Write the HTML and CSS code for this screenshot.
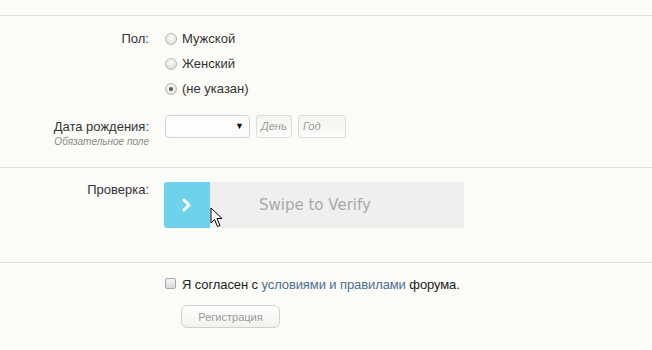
FILE: index.html
```html
<!DOCTYPE html>
<html lang="ru">
<head>
<meta charset="utf-8">
<link rel="stylesheet" href="styles.css">
</head>
<body>
<div class="page">
  <div class="top"></div>

  <section class="block block-1">
    <div class="row">
      <div class="label">Пол:</div>
      <div class="radios">
        <label class="opt"><span class="radio"></span>Мужской</label>
        <label class="opt"><span class="radio"></span>Женский</label>
        <label class="opt"><span class="radio checked"></span>(не указан)</label>
      </div>
    </div>
    <div class="row row-date">
      <div class="label">Дата рождения:<div class="hint">Обязательное поле</div></div>
      <div class="date">
        <div class="select"><span class="arrow">▼</span></div>
        <div class="input day">День</div>
        <div class="input year">Год</div>
      </div>
    </div>
  </section>

  <section class="block block-2">
    <div class="row">
      <div class="label label-top">Проверка:</div>
      <div class="slider">
        <div class="handle">
          <svg width="12" height="14" viewBox="0 0 12 14"><path d="M3 2 L8 7 L3 12" fill="none" stroke="#fff" stroke-width="3" stroke-linecap="round" stroke-linejoin="round"/></svg>
        </div>
        <div class="track">Swipe to Verify</div>
        <svg class="cursor" width="14" height="21" viewBox="0 0 14 21"><path d="M1 1 L1 16 L4.5 12.5 L7.5 19.5 L10 18.5 L7 11.5 L12 11.5 Z" fill="#fff" stroke="#000" stroke-width="1" stroke-linejoin="round"/></svg>
      </div>
    </div>
  </section>

  <section class="block block-3">
    <div class="row">
      <div class="label"></div>
      <div class="agree">
        <div class="check-line"><span class="checkbox"></span>Я согласен с <a class="link">условиями и правилами</a> форума.</div>
        <div class="button">Регистрация</div>
      </div>
    </div>
  </section>
</div>
</body>
</html>
```

FILE: styles.css
```css
html, body {
  margin: 0;
  padding: 0;
  background: #fbfbf7;
}
body {
  font-family: "Liberation Sans", Arial, sans-serif;
  font-size: 13px;
  color: #333;
  width: 652px;
  height: 350px;
  overflow: hidden;
}
.top {
  height: 15px;
}
.block {
  border-top: 1px solid #e1e1dc;
}
.block-1 {
  padding-top: 10px;
  height: 141px;
}
.block-2 {
  padding-top: 14px;
  height: 80px;
}
.block-3 {
  padding-top: 12px;
}
.row {
  display: grid;
  grid-template-columns: 149px 1fr;
  column-gap: 15px;
}
.label {
  text-align: right;
  line-height: 25px;
  color: #333;
}
.label-top {
  line-height: 16px;
}
.radios {
  display: flex;
  flex-direction: column;
}
.opt {
  display: flex;
  align-items: center;
  height: 25px;
  color: #333;
}
.radio {
  width: 12px;
  height: 12px;
  box-sizing: border-box;
  border-radius: 50%;
  border: 1px solid #b9b9b9;
  background: radial-gradient(circle at 50% 35%, #fafafa 0%, #e6e6e6 60%, #d4d4d4 100%);
  margin: 0 5px 0 1px;
  position: relative;
}
.radio.checked::after {
  content: "";
  position: absolute;
  left: 3px;
  top: 3px;
  width: 4px;
  height: 4px;
  border-radius: 50%;
  background: #555;
}
.row-date {
  margin-top: 14px;
}
.row-date .label {
  line-height: 23px;
}
.hint {
  font-size: 10px;
  font-style: italic;
  color: #8a8a8a;
  line-height: 11px;
  margin-top: -2px;
}
.date {
  display: flex;
  gap: 6px;
  align-items: flex-start;
  padding-left: 1px;
}
.select {
  width: 85px;
  height: 23px;
  box-sizing: border-box;
  border: 1px solid #d3d3d3;
  border-radius: 4px;
  background: #fdfdfd;
  position: relative;
}
.arrow {
  position: absolute;
  right: 5px;
  top: 5px;
  font-size: 9px;
  color: #111;
}
.input {
  height: 23px;
  box-sizing: border-box;
  border: 1px solid #dcdcdc;
  border-radius: 3px;
  background: linear-gradient(#f4f4f1, #fbfbf9);
  font-size: 11px;
  font-style: italic;
  color: #9a9a9a;
  padding: 4px 0 0 4px;
}
.day {
  width: 36px;
}
.year {
  width: 48px;
}
.slider {
  display: flex;
  width: 300px;
  height: 46px;
  position: relative;
}
.handle {
  width: 46px;
  height: 46px;
  background: #6dd2ea;
  border-radius: 3px 0 0 3px;
  display: flex;
  align-items: center;
  justify-content: center;
}
.handle svg {
  margin-left: -1px;
}
.track {
  flex: 1;
  background: #efefef;
  color: #a9a9a9;
  font-family: "DejaVu Sans", Verdana, sans-serif;
  font-size: 15px;
  display: flex;
  align-items: center;
  padding-left: 49px;
}
.cursor {
  position: absolute;
  left: 46px;
  top: 25px;
}
.agree {
  display: flex;
  flex-direction: column;
  align-items: flex-start;
}
.check-line {
  display: flex;
  align-items: center;
  line-height: 20px;
  color: #222;
  white-space: pre;
  letter-spacing: -0.1px;
}
.checkbox {
  width: 11px;
  height: 11px;
  box-sizing: border-box;
  border: 1px solid #a8a8a8;
  border-radius: 2px;
  background: linear-gradient(#f6f6f6, #dadada);
  margin: -3px 6px 0 1px;
}
.link {
  color: #4f6d8f;
}
.button {
  margin-top: 10px;
  margin-left: 17px;
  width: 99px;
  height: 23px;
  box-sizing: border-box;
  border: 1px solid #d0d0d0;
  border-radius: 6px;
  background: linear-gradient(#ffffff, #f1f1ee);
  color: #9a9a9a;
  font-size: 11px;
  display: flex;
  align-items: center;
  justify-content: center;
}
```
